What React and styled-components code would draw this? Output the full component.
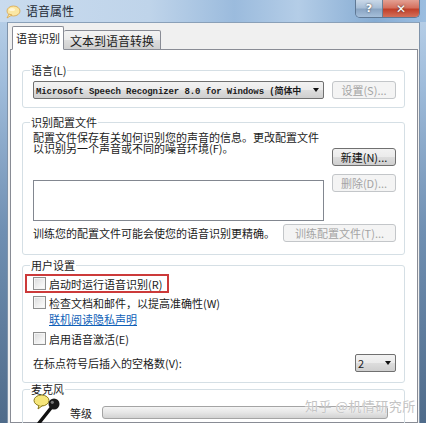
import React from 'react';
import styled, { createGlobalStyle } from 'styled-components';

const GlobalStyle = createGlobalStyle`
  html, body {
    margin: 0;
    padding: 0;
    background: #5d7b9c;
  }
  body {
    font-family: "Noto Sans CJK SC", "Liberation Sans", sans-serif;
    font-size: 11px;
    color: #1b1b1b;
  }
`;

const Window = styled.div`
  position: relative;
  width: 426px;
  height: 423px;
  overflow: hidden;
  display: flex;
  flex-direction: column;
  background: linear-gradient(to bottom, #bcd3ea 0%, #9fbcdb 20%, #6f8fb2 55%, #4f6b8a 100%);
`;

const TitleBar = styled.div`
  height: 22px;
  flex: 0 0 22px;
  display: flex;
  align-items: flex-start;
  padding-right: 6px;
  background: linear-gradient(to right, #c9dbee 0%, #bfd4ea 35%, #9bbbdd 55%, #b4cde7 70%, #86acd3 88%, #9bbde0 100%);
`;

const TitleIcon = styled.div`
  width: 16px;
  height: 16px;
  margin: 3px 5px 0 5px;
`;

const TitleText = styled.div`
  flex: 1;
  font-size: 12px;
  line-height: 22px;
  color: #1e2a36;
`;

const CaptionButtons = styled.div`
  display: flex;
  height: 17px;
  border: 1px solid #5f7894;
  border-top: none;
  border-radius: 0 0 5px 5px;
  overflow: hidden;
`;

const CaptionButton = styled.div`
  width: ${(p) => p.$w}px;
  height: 17px;
  display: flex;
  align-items: center;
  justify-content: center;
  color: #fff;
  font-family: "DejaVu Sans", sans-serif;
  font-weight: bold;
  font-size: ${(p) => (p.$close ? 12 : 11)}px;
  text-shadow: 0 0 2px #333;
  background: ${(p) =>
    p.$close
      ? 'linear-gradient(to bottom, #e3a093 0%, #d5715f 45%, #c1402a 55%, #d4705a 100%)'
      : 'linear-gradient(to bottom, #c9d8e8 0%, #a9bfd7 45%, #8aa5c3 55%, #a6bfda 100%)'};
  border-left: ${(p) => (p.$close ? '1px solid #6b7f96' : 'none')};
`;

const FrameRow = styled.div`
  flex: 1;
  display: flex;
  padding: 0 6px 0 7px;
  min-height: 0;
`;

const Body = styled.div`
  flex: 1;
  display: flex;
  flex-direction: column;
  background: #f0f0f0;
  border-left: 1px solid #7f93aa;
  border-top: 1px solid #8aa0b8;
  border-right: 1px solid #7f93aa;
  padding: 3px 1px 0 2px;
  min-height: 0;
`;

const Tabs = styled.div`
  display: flex;
  align-items: flex-end;
  padding-left: 2px;
  position: relative;
  z-index: 1;
  margin-bottom: -1px;
`;

const Tab = styled.div`
  height: ${(p) => (p.$active ? 22 : 18)}px;
  padding: 0 ${(p) => (p.$active ? 3 : 6)}px;
  display: flex;
  align-items: center;
  font-size: ${(p) => (p.$active ? 11 : 12)}px;
  border: 1px solid #898c95;
  border-bottom: ${(p) => (p.$active ? '1px solid #fff' : '1px solid #898c95')};
  border-left: ${(p) => (p.$first || p.$active ? '1px solid #898c95' : 'none')};
  border-radius: 2px 2px 0 0;
  background: ${(p) =>
    p.$active ? '#fff' : 'linear-gradient(to bottom, #f3f3f3 0%, #ebebeb 50%, #dddddd 51%, #cfcfcf 100%)'};
`;

const Pane = styled.div`
  flex: 1;
  background: #fff;
  border: 1px solid #898c95;
  padding: 14px 12px 0 11px;
  min-height: 0;
`;

const Group = styled.fieldset`
  margin: ${(p) => p.$top || 0}px 0 0 0;
  padding: 0 8px ${(p) => p.$bottom ?? 9}px 10px;
  border: 1px solid #d5dfe5;
  border-radius: 3px;
  min-width: 0;
`;

const Legend = styled.legend`
  margin-left: -3px;
  padding: 0 1px;
  font-size: 11px;
  line-height: 13px;
`;

const Row = styled.div`
  display: flex;
  align-items: ${(p) => p.$align || 'center'};
  justify-content: ${(p) => p.$justify || 'flex-start'};
  gap: ${(p) => p.$gap ?? 8}px;
  margin-top: ${(p) => p.$top || 0}px;
`;

const Combo = styled.div`
  width: ${(p) => p.$w}px;
  height: 18px;
  box-sizing: border-box;
  border: 1px solid #707070;
  border-radius: 2px;
  display: flex;
  align-items: center;
  padding: 0 4px 0 2px;
  background: linear-gradient(to bottom, #f2f2f2 0%, #ebebeb 50%, #dddddd 51%, #cfcfcf 100%);
`;

const ComboText = styled.span`
  flex: 1;
  white-space: nowrap;
  font-family: ${(p) => (p.$mono ? '"Liberation Mono", "Noto Sans CJK SC", monospace' : 'inherit')};
  font-weight: ${(p) => (p.$mono ? 'bold' : 'normal')};
  font-size: ${(p) => (p.$mono ? 9 : 11)}px;
  letter-spacing: ${(p) => (p.$mono ? '-0.1px' : '0')};
`;

const Arrow = styled.span`
  width: 0;
  height: 0;
  border-left: 3.5px solid transparent;
  border-right: 3.5px solid transparent;
  border-top: 4px solid #111;
  margin-left: 3px;
`;

const Button = styled.div`
  width: ${(p) => p.$w || 64}px;
  height: ${(p) => p.$h || 18}px;
  box-sizing: border-box;
  margin-top: ${(p) => p.$top || 0}px;
  border: 1px solid ${(p) => (p.$disabled ? '#c3c6c9' : '#707070')};
  border-radius: 3px;
  display: flex;
  align-items: center;
  justify-content: center;
  font-size: 11px;
  color: ${(p) => (p.$disabled ? '#a4a4a4' : '#111')};
  background: ${(p) =>
    p.$disabled ? '#f4f4f4' : 'linear-gradient(to bottom, #f2f2f2 0%, #ebebeb 50%, #dddddd 51%, #cfcfcf 100%)'};
`;

const ProfileGrid = styled.div`
  display: grid;
  grid-template-columns: 291px 64px;
  column-gap: 8px;
`;

const Column = styled.div`
  display: flex;
  flex-direction: column;
`;

const Description = styled.div`
  line-height: 11px;
  white-space: nowrap;
  margin-top: 3px;
`;

const ListBox = styled.div`
  height: 39px;
  margin-top: 26px;
  border: 1px solid #828790;
  background: #fff;
`;

const CheckRow = styled.div`
  display: flex;
  align-items: center;
  gap: 3px;
  height: ${(p) => p.$h || 18}px;
  margin-top: ${(p) => p.$top || 0}px;
  width: ${(p) => (p.$marked ? '134px' : 'auto')};
  margin-left: ${(p) => (p.$marked ? '-8px' : '0')};
  padding-left: ${(p) => (p.$marked ? '6px' : '0')};
  border: ${(p) => (p.$marked ? '2px solid #cc3a3a' : 'none')};
`;

const Box = styled.span`
  width: 11px;
  height: 11px;
  border: 1px solid #8e8f8f;
  background: linear-gradient(135deg, #d9dadb 0%, #f1f1f1 60%, #fff 100%);
  box-shadow: inset 0 0 0 1px #f4f4f4;
  flex: 0 0 auto;
`;

const Link = styled.div`
  margin: 0 0 0 16px;
  height: 15px;
  line-height: 15px;
  color: #0f5fb8;
  text-decoration: underline;
`;

const LevelBar = styled.div`
  flex: 1;
  height: 11px;
  margin: 12px 8px 0 3px;
  border: 1px solid #a4a4a4;
  border-radius: 3px;
  background: linear-gradient(to bottom, #f4f4f4 0%, #e6e6e6 50%, #d2d2d2 100%);
`;

const LevelLabel = styled.span`
  margin-top: 11px;
`;

const Watermark = styled.div`
  position: absolute;
  left: 305px;
  top: 396px;
  font-size: 13px;
  letter-spacing: 0.5px;
  color: #c4c4c4;
  text-shadow: 0 0 1px #fff;
  white-space: nowrap;
`;

function SpeechIcon() {
  return (
    <svg width="16" height="16" viewBox="0 0 16 16">
      <ellipse cx="8.5" cy="8" rx="6.5" ry="5" fill="#fbe7a4" stroke="#d9a64a" strokeWidth="0.8" />
      <path d="M4 11 L2 15 L7 12 Z" fill="#fbe7a4" stroke="#d9a64a" strokeWidth="0.8" />
      <ellipse cx="7" cy="6.5" rx="3" ry="1.6" fill="#fff6d6" />
    </svg>
  );
}

function MicIcon() {
  return (
    <svg width="30" height="30" viewBox="0 0 30 30">
      <ellipse cx="8.5" cy="6.5" rx="7.5" ry="5.5" fill="#f6e67a" stroke="#8a7a1c" strokeWidth="1" />
      <path d="M6 11 L5 15 L9.5 11.5" fill="#f6e67a" stroke="#8a7a1c" strokeWidth="1" />
      <line x1="18" y1="14" x2="6" y2="29" stroke="#111" strokeWidth="3.4" strokeLinecap="round" />
      <circle cx="21" cy="10" r="5.5" fill="#1a1a1a" />
      <circle cx="19.3" cy="8.3" r="1.6" fill="#777" />
    </svg>
  );
}

export default function App() {
  return (
    <>
      <GlobalStyle />
      <Window>
        <TitleBar>
          <TitleIcon><SpeechIcon /></TitleIcon>
          <TitleText>语音属性</TitleText>
          <CaptionButtons>
            <CaptionButton $w={26}>?</CaptionButton>
            <CaptionButton $w={36} $close>✕</CaptionButton>
          </CaptionButtons>
        </TitleBar>
        <FrameRow>
          <Body>
            <Tabs>
              <Tab $active $first>语音识别</Tab>
              <Tab>文本到语音转换</Tab>
            </Tabs>
            <Pane>
              <Group $bottom={8}>
                <Legend>语言(L)</Legend>
                <Row $top={4}>
                  <Combo $w={291}>
                    <ComboText $mono>Microsoft Speech Recognizer 8.0 for Windows (简体中</ComboText>
                    <Arrow />
                  </Combo>
                  <Button $disabled>设置(S)...</Button>
                </Row>
              </Group>

              <Group $top={8} $bottom={12}>
                <Legend>识别配置文件</Legend>
                <ProfileGrid>
                  <Column>
                    <Description>
                      配置文件保存有关如何识别您的声音的信息。更改配置文件
                      <br />
                      以识别另一个声音或不同的噪音环境(F)。
                    </Description>
                    <ListBox />
                  </Column>
                  <Column>
                    <Button $top={19}>新建(N)...</Button>
                    <Button $top={8} $disabled>删除(D)...</Button>
                  </Column>
                </ProfileGrid>
                <Row $top={3} $justify="space-between">
                  <span>训练您的配置文件可能会使您的语音识别更精确。</span>
                  <Button $w={113} $disabled>训练配置文件(T)...</Button>
                </Row>
              </Group>

              <Group $top={4} $bottom={10}>
                <Legend>用户设置</Legend>
                <CheckRow $marked $h={15} $top={2}>
                  <Box />
                  <span>启动时运行语音识别(R)</span>
                </CheckRow>
                <CheckRow $h={19}>
                  <Box />
                  <span>检查文档和邮件，以提高准确性(W)</span>
                </CheckRow>
                <Link>联机阅读隐私声明</Link>
                <CheckRow $h={19} $top={2}>
                  <Box />
                  <span>启用语音激活(E)</span>
                </CheckRow>
                <Row $top={6} $justify="space-between">
                  <span>在标点符号后插入的空格数(V):</span>
                  <Combo $w={41}>
                    <ComboText>2</ComboText>
                    <Arrow />
                  </Combo>
                </Row>
              </Group>

              <Group $top={0}>
                <Legend>麦克风</Legend>
                <Row $top={-2} $gap={7} $align="flex-start">
                  <MicIcon />
                  <LevelLabel>等级</LevelLabel>
                  <LevelBar />
                </Row>
              </Group>
            </Pane>
          </Body>
        </FrameRow>
        <Watermark>知乎 @机情研究所</Watermark>
      </Window>
    </>
  );
}
